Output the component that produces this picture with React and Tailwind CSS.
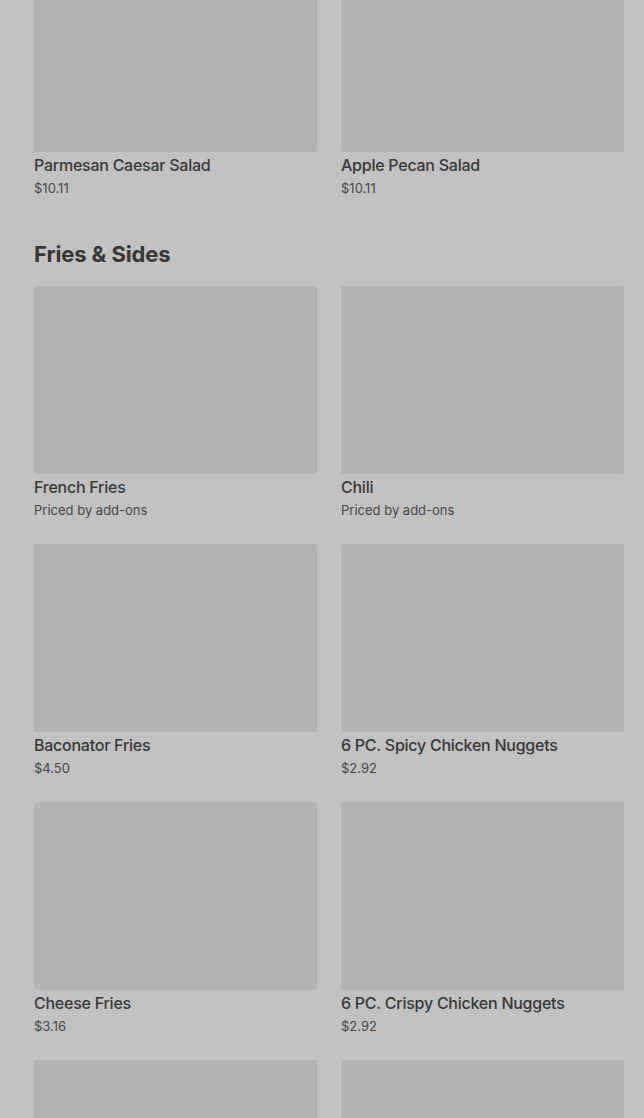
import React from 'react';

const salads = [
    { name: 'Parmesan Caesar Salad', price: '$10.11' },
    { name: 'Apple Pecan Salad', price: '$10.11' },
];

const sides = [
    { name: 'French Fries', price: 'Priced by add-ons' },
    { name: 'Chili', price: 'Priced by add-ons' },
    { name: 'Baconator Fries', price: '$4.50' },
    { name: '6 PC. Spicy Chicken Nuggets', price: '$2.92' },
    { name: 'Cheese Fries', price: '$3.16' },
    { name: '6 PC. Crispy Chicken Nuggets', price: '$2.92' },
];

const ItemCard = ({ item }) => (
    <div className="flex flex-col">
        <div className="h-[188px] w-full rounded-[2px] bg-[#b3b3b3]" />
        <div className="mt-[3px] text-[16px] leading-[20px] font-medium text-[#383838] tracking-[-0.25px]">{item.name}</div>
        <div className="mt-1 text-[13px] leading-[19px] text-[#464646]">{item.price}</div>
    </div>
);

const App = () => {
    return (
        <div className="h-[1118px] overflow-hidden bg-[#c1c1c1]" style={{ fontFamily: 'Inter, "Noto Sans", sans-serif' }}>
            <div className="-mt-[36px] pl-[34px] pr-[20px]">
                <div className="grid grid-cols-2 gap-x-6 gap-y-6">
                    {salads.map((item) => (
                        <ItemCard key={item.name} item={item} />
                    ))}
                </div>

                <h2 className="mt-[42px] mb-[18px] text-[22px] leading-[28px] font-bold text-[#363636] tracking-[-0.1px]">
                    Fries &amp; Sides
                </h2>

                <div className="grid grid-cols-2 gap-x-6 gap-y-6">
                    {sides.map((item) => (
                        <ItemCard key={item.name} item={item} />
                    ))}
                    {/* next row is scrolled below the fold, only the photos show */}
                    <div className="h-[188px] rounded-[2px] bg-[#b3b3b3]" />
                    <div className="h-[188px] rounded-[2px] bg-[#b3b3b3]" />
                </div>
            </div>
        </div>
    );
};

export default App;
